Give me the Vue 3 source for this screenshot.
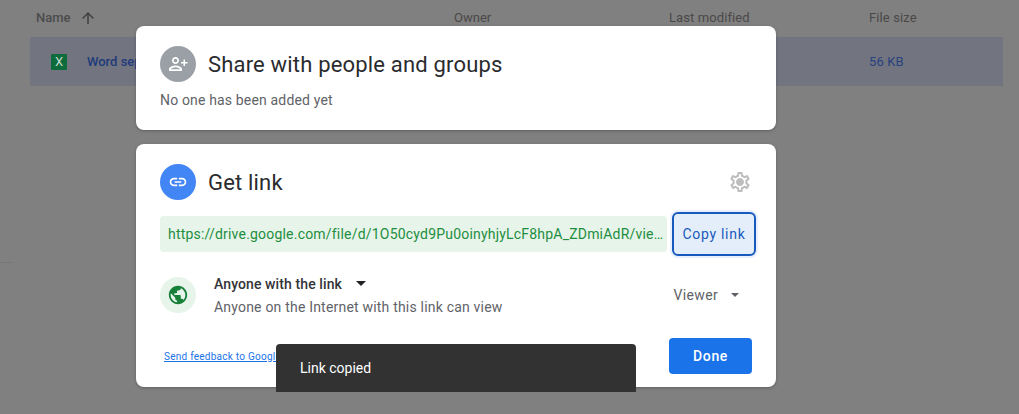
<script setup>
const url = 'https://drive.google.com/file/d/1O50cyd9Pu0oinyhjyLcF8hpA_ZDmiAdR/view?usp=sharing'
</script>

<template>
  <div class="page">
    <div class="files">
      <div class="head">
        <div class="col-name">
          <span>Name</span>
          <svg width="18" height="18" viewBox="0 0 24 24"><path d="M4 12l1.41 1.41L11 7.83V20h2V7.83l5.58 5.59L20 12l-8-8-8 8z" fill="#3f3f3f"/></svg>
        </div>
        <div class="col-owner">Owner</div>
        <div class="col-mod">Last modified</div>
        <div class="col-size">File size</div>
      </div>
      <div class="row">
        <div class="col-name">
          <span class="xls">X</span>
          <span class="fname">Word sep</span>
        </div>
        <div class="col-owner"></div>
        <div class="col-mod"></div>
        <div class="col-size size-val">56 KB</div>
      </div>
    </div>
    <div class="tick"></div>

    <div class="modal">
      <section class="card share">
        <div class="title-row">
          <span class="circle grey">
            <svg width="24" height="24" viewBox="0 0 24 24"><path d="M9.5 12c1.93 0 3.5-1.57 3.5-3.5S11.43 5 9.5 5 6 6.57 6 8.5 7.57 12 9.5 12zm0-5.3c1 0 1.8.8 1.8 1.8s-.8 1.8-1.8 1.8-1.8-.8-1.8-1.8.8-1.8 1.8-1.8zM9.5 13.6c-2.5 0-6.5 1.25-6.5 3.7V19h13v-1.7c0-2.45-4-3.7-6.5-3.7zm-4.7 3.7c.5-.9 3-2 4.7-2s4.2 1.1 4.7 2H4.800zM19 10V7.500h-1.500V10H15v1.500h2.500V14H19v-2.500h2.500V10H19z" fill="#fff"/></svg>
          </span>
          <h2>Share with people and groups</h2>
        </div>
        <p class="empty">No one has been added yet</p>
      </section>

      <section class="card link">
        <div class="title-row">
          <span class="circle blue">
            <svg class="link-icon" width="24" height="24" viewBox="0 0 24 24"><path d="M17 7h-4v2h4c1.650 0 3 1.350 3 3s-1.350 3-3 3h-4v2h4c2.760 0 5-2.240 5-5s-2.240-5-5-5zm-6 8H7c-1.650 0-3-1.350-3-3s1.350-3 3-3h4V7H7c-2.760 0-5 2.240-5 5s2.240 5 5 5h4v-2zm-3-4h8v2H8z" fill="#fff"/></svg>
          </span>
          <h2>Get link</h2>
          <svg class="gear" width="24" height="24" viewBox="0 0 24 24"><path d="M19.430 12.980c.04-.32.07-.64.07-.98s-.03-.66-.07-.98l2.110-1.650c.19-.15.24-.42.12-.64l-2-3.460c-.12-.22-.39-.3-.61-.22l-2.490 1c-.52-.4-1.080-.73-1.690-.98l-.38-2.650A.49.490 0 0 0 14 2h-4c-.25 0-.46.18-.49.42l-.38 2.650c-.61.25-1.170.59-1.690.98l-2.490-1c-.23-.09-.49 0-.61.22l-2 3.460c-.13.22-.07.49.12.64l2.110 1.650c-.04.32-.07.65-.07.98s.03.66.07.98l-2.110 1.650c-.19.15-.24.42-.12.64l2 3.460c.12.22.39.3.61.22l2.490-1c.52.4 1.080.73 1.690.98l.38 2.650c.03.24.24.42.49.42h4c.25 0 .46-.18.49-.42l.38-2.650c.61-.25 1.170-.59 1.690-.98l2.490 1c.23.09.49 0 .61-.22l2-3.460c.12-.22.07-.49-.12-.64l-2.110-1.650zM17.450 11.270c.04.31.05.52.05.73s-.02.43-.05.73l-.14 1.130.89.7 1.080.84-.7 1.210-1.270-.51-1.040-.42-.9.68c-.43.32-.84.56-1.250.73l-1.060.43-.16 1.130-.2 1.350h-1.400l-.19-1.350-.16-1.130-1.060-.43c-.43-.18-.83-.41-1.230-.71l-.91-.7-1.060.43-1.270.51-.7-1.210 1.080-.84.89-.7-.14-1.130c-.03-.31-.05-.54-.05-.74s.02-.43.05-.73l.14-1.130-.89-.7-1.080-.84.7-1.210 1.270.51 1.040.42.9-.68c.43-.32.84-.56 1.250-.73l1.060-.43.16-1.130.2-1.350h1.390l.19 1.350.16 1.130 1.060.43c.43.18.83.41 1.230.71l.91.7 1.060-.43 1.270-.51.7 1.210-1.070.85-.89.7.14 1.130zM12 8c-2.210 0-4 1.790-4 4s1.790 4 4 4 4-1.790 4-4-1.790-4-4-4z" fill="#bdbdbd"/></svg>
        </div>

        <div class="url-row">
          <div class="url">{{ url }}</div>
          <button class="copy">Copy link</button>
        </div>

        <div class="access">
          <span class="circle green">
            <svg class="globe" width="24" height="24" viewBox="0 0 24 24"><path d="M12 2C6.480 2 2 6.480 2 12s4.480 10 10 10 10-4.480 10-10S17.520 2 12 2zm-1 17.930c-3.950-.49-7-3.850-7-7.930 0-.62.08-1.210.21-1.790L9 15v1c0 1.100.9 2 2 2v1.930zm6.900-2.540c-.26-.81-1-1.390-1.900-1.390h-1v-3c0-.55-.45-1-1-1H8v-2h2c.55 0 1-.45 1-1V7h2c1.100 0 2-.9 2-2v-.41c2.930 1.190 5 4.060 5 7.410 0 2.080-.8 3.970-2.100 5.390z" fill="#188038"/></svg>
          </span>
          <div class="access-text">
            <div class="who">Anyone with the link <span class="caret dark"></span></div>
            <div class="desc">Anyone on the Internet with this link can view</div>
          </div>
          <div class="role">Viewer <span class="caret grey-caret"></span></div>
        </div>

        <div class="foot">
          <a class="feedback">Send feedback to Google</a>
          <button class="done">Done</button>
        </div>
      </section>
    </div>

    <div class="toast">Link copied</div>
  </div>
</template>

<style scoped>
.page {
  position: relative;
  width: 1019px;
  height: 414px;
  overflow: hidden;
  background: #808080;
  font-family: Roboto, sans-serif;
}

.files {
  padding-left: 30px;
  width: 973px;
}
.head, .row {
  display: flex;
  align-items: center;
}
.head {
  height: 35px;
  padding-bottom: 2px;
  font-size: 13px;
  font-weight: 500;
  color: #4c4c4c;
  border-bottom: 1px solid #707480;
}
.row {
  height: 48px;
  padding-bottom: 1px;
  box-sizing: border-box;
  background: #72757f;
}
.col-name {
  width: 424px;
  display: flex;
  align-items: center;
  padding-left: 6px;
  box-sizing: border-box;
}
.head .col-name svg { margin-left: 8px; }
.col-owner { width: 215px; font-weight: 400; }
.col-mod { width: 200px; font-weight: 400; letter-spacing: 0.1px; }
.col-size { font-weight: 400; letter-spacing: 0.1px; }
.head .col-owner, .head .col-mod, .head .col-size { color: #4b4848; }
.xls {
  width: 16px;
  height: 16px;
  margin-left: 15px;
  border-radius: 1px;
  background: #0d6b3c;
  color: #c5d9cc;
  font-size: 13px;
  line-height: 16px;
  text-align: center;
}
.fname {
  margin-left: 20px;
  font-size: 13px;
  font-weight: 500;
  color: #213a7c;
}
.size-val {
  font-size: 13px;
  color: #27417f;
}
.tick {
  position: absolute;
  left: 0;
  top: 262px;
  width: 13px;
  height: 1px;
  background: #767676;
}

.modal {
  position: absolute;
  left: 136px;
  top: 26px;
  width: 640px;
  display: flex;
  flex-direction: column;
  gap: 14px;
}
.card {
  background: #fff;
  border-radius: 8px;
  box-shadow: 0 1px 3px rgba(60, 64, 67, 0.5);
  padding: 20px 24px 0;
  box-sizing: border-box;
}
.share { height: 104px; }
.link { height: 243px; }
.title-row {
  display: flex;
  align-items: center;
  height: 36px;
}
.circle {
  width: 36px;
  height: 36px;
  border-radius: 50%;
  display: flex;
  align-items: center;
  justify-content: center;
  flex: none;
}
.link-icon { width: 20px; height: 20px; }
.globe { width: 22px; height: 22px; }
.grey { background: #9aa0a6; }
.blue { background: #4285f4; }
.green { background: #e6f4ea; }
h2 {
  margin: 0 0 0 12px;
  font-size: 22px;
  font-weight: 400;
  letter-spacing: 0.18px;
  color: #2a2b2e;
  flex: 1;
}
.empty {
  margin: 8px 0 0;
  font-size: 14px;
  line-height: 20px;
  letter-spacing: 0.16px;
  color: #5f6368;
}

.url-row {
  display: flex;
  align-items: center;
  margin-top: 12px;
  margin-right: -4px;
}
.url {
  width: 507px;
  height: 36px;
  box-sizing: border-box;
  padding: 0 2px 0 8px;
  background: #e6f4ea;
  border-radius: 4px;
  color: #1e8e3e;
  font-size: 14px;
  letter-spacing: 0.2px;
  line-height: 36px;
  white-space: nowrap;
  overflow: hidden;
  text-overflow: ellipsis;
}
.copy {
  width: 84px;
  height: 44px;
  margin-left: 5px;
  border: 2px solid #185abc;
  border-radius: 6px;
  background: #e4eefb;
  box-shadow: 0 0 0 2px #e8f0fe;
  color: #185abc;
  font-family: Roboto, sans-serif;
  font-size: 14px;
  font-weight: 400;
  letter-spacing: 0.7px;
  padding: 0;
}

.access {
  display: flex;
  align-items: center;
  margin-top: 21px;
  height: 36px;
}
.access-text {
  margin-left: 18px;
  flex: 1;
}
.who {
  font-size: 14px;
  font-weight: 500;
  line-height: 20px;
  letter-spacing: 0.1px;
  color: #333438;
  display: flex;
  align-items: center;
}
.desc {
  margin-top: 3px;
  font-size: 14px;
  line-height: 20px;
  letter-spacing: 0.2px;
  color: #5f6368;
}
.caret {
  display: inline-block;
  width: 0;
  height: 0;
}
.dark {
  border-left: 5px solid transparent;
  border-right: 5px solid transparent;
  border-top: 5px solid #202124;
  margin-left: 14px;
}
.grey-caret {
  border-left: 4px solid transparent;
  border-right: 4px solid transparent;
  border-top: 4px solid #5f6368;
  margin-left: 13px;
}
.role {
  display: flex;
  align-items: center;
  font-size: 14px;
  font-weight: 400;
  letter-spacing: 0.35px;
  color: #5f6368;
  margin-right: 13px;
}

.foot {
  display: flex;
  align-items: center;
  justify-content: space-between;
  margin-top: 25px;
}
.feedback {
  font-size: 10px;
  letter-spacing: 0.25px;
  color: #1a73e8;
  text-decoration: underline;
  margin-left: 4px;
}
.done {
  width: 83px;
  height: 36px;
  border: none;
  border-radius: 4px;
  background: #1a73e8;
  color: #fff;
  font-family: Roboto, sans-serif;
  font-size: 14px;
  font-weight: 500;
  letter-spacing: 0.6px;
}

.toast {
  position: absolute;
  left: 276px;
  top: 344px;
  width: 360px;
  height: 48px;
  box-sizing: border-box;
  padding-left: 24px;
  background: #323232;
  border-radius: 4px 4px 0 0;
  color: #fff;
  font-size: 14px;
  line-height: 48px;
}
</style>
